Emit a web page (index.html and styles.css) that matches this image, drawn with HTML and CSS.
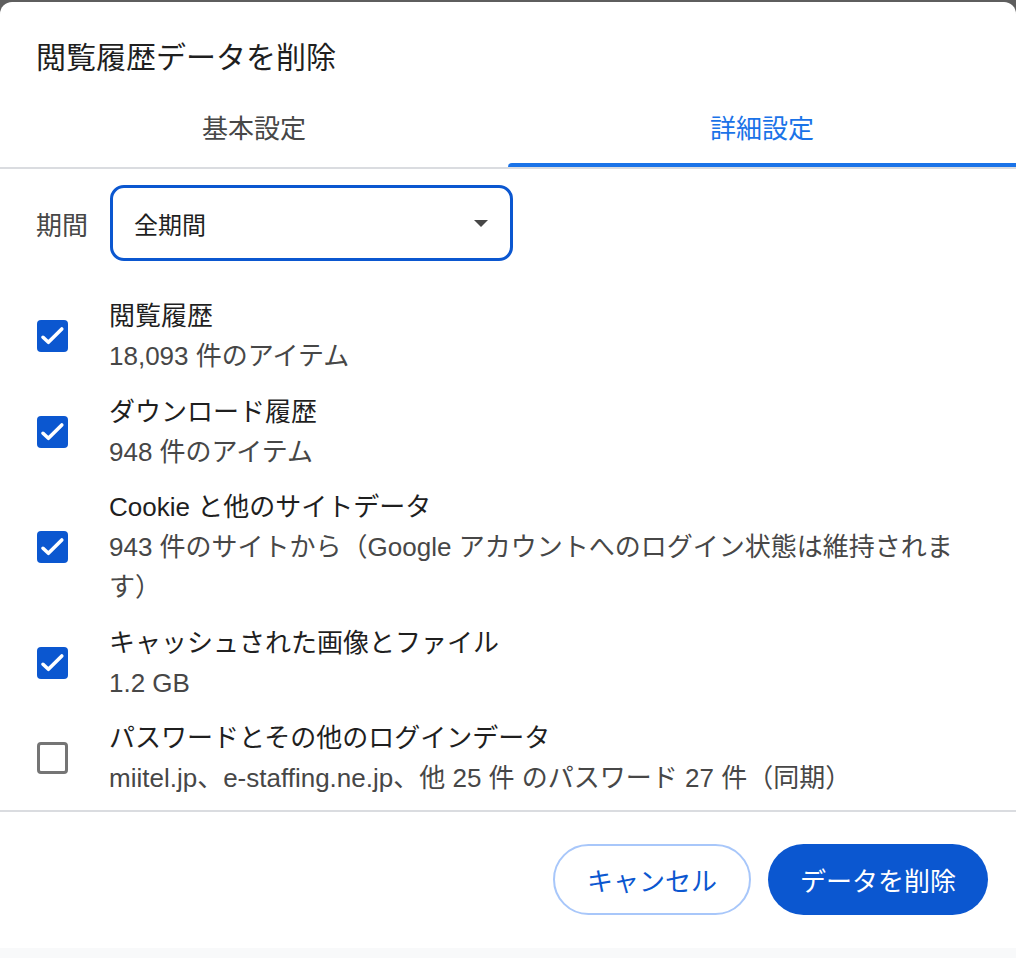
FILE: index.html
```html
<!DOCTYPE html>
<html>

<head>
    <meta charset="utf-8">
    <title>閲覧履歴データを削除</title>
    <link rel="stylesheet" href="styles.css">
</head>

<body>
    <div class="dialog">
        <div class="title">閲覧履歴データを削除</div>
        <ul class="tabs">
            <li>基本設定</li>
            <li class="current">詳細設定</li>
        </ul>
        <div class="content">
            <div class="period">
                <span class="period-label">期間</span>
                <div class="select">
                    <span>全期間</span>
                    <i class="arrow"></i>
                </div>
            </div>
            <ul class="items">
                <li>
                    <span class="box checked"><svg viewBox="0 0 31 31"><path d="M6 17.3l5.4 5 13.4-13.4"/></svg></span>
                    <div class="text">
                        <div class="name">閲覧履歴</div>
                        <div class="desc">18,093 件のアイテム</div>
                    </div>
                </li>
                <li>
                    <span class="box checked"><svg viewBox="0 0 31 31"><path d="M6 17.3l5.4 5 13.4-13.4"/></svg></span>
                    <div class="text">
                        <div class="name">ダウンロード履歴</div>
                        <div class="desc">948 件のアイテム</div>
                    </div>
                </li>
                <li>
                    <span class="box checked"><svg viewBox="0 0 31 31"><path d="M6 17.3l5.4 5 13.4-13.4"/></svg></span>
                    <div class="text">
                        <div class="name">Cookie と他のサイトデータ</div>
                        <div class="desc">943 件のサイトから（Google アカウントへのログイン状態は維持されます）</div>
                    </div>
                </li>
                <li>
                    <span class="box checked"><svg viewBox="0 0 31 31"><path d="M6 17.3l5.4 5 13.4-13.4"/></svg></span>
                    <div class="text">
                        <div class="name">キャッシュされた画像とファイル</div>
                        <div class="desc">1.2 GB</div>
                    </div>
                </li>
                <li>
                    <span class="box"></span>
                    <div class="text">
                        <div class="name">パスワードとその他のログインデータ</div>
                        <div class="desc">miitel.jp、e-staffing.ne.jp、他 25 件 のパスワード 27 件（同期）</div>
                    </div>
                </li>
            </ul>
        </div>
        <div class="footer">
            <a class="btn cancel" href="javascript:void(0)">キャンセル</a>
            <a class="btn primary" href="javascript:void(0)">データを削除</a>
        </div>
    </div>
</body>

</html>
```

FILE: styles.css
```css
* {
    padding: 0;
    margin: 0;
    box-sizing: border-box;
}

ul {
    list-style: none;
}

a {
    text-decoration: none;
}

html,
body {
    width: 100%;
    height: 100%;
}

body {
    font-family: "Liberation Sans", "Noto Sans CJK JP", sans-serif;
    color: #1f1f1f;
    background: linear-gradient(#5e5e5e 0, #5e5e5e 20px, #f8f9fa 20px);
    overflow: hidden;
}

.dialog {
    margin-top: 2px;
    height: 946px;
    background-color: #fff;
    border-radius: 12px 12px 0 0;
}

.title {
    padding: 35px 36px 0;
    font-size: 30px;
    line-height: 42px;
}

.tabs {
    display: grid;
    grid-template-columns: 1fr 1fr;
    border-bottom: 2px solid #dadce0;
}

.tabs li {
    position: relative;
    padding: 30px 0 18px;
    font-size: 26px;
    line-height: 40px;
    text-align: center;
    color: #474747;
}

.tabs li.current {
    color: #1a73e8;
}

.tabs li.current::after {
    content: "";
    position: absolute;
    left: 0;
    right: 0;
    bottom: 0;
    height: 4px;
    background-color: #1a73e8;
    border-radius: 4px 0 0 0;
}

.content {
    height: 643px;
    padding: 16px 40px 0 36px;
    border-bottom: 2px solid #dadce0;
}

.period {
    display: flex;
    align-items: center;
    gap: 22px;
}

.period-label {
    font-size: 26px;
    color: #474747;
}

.select {
    display: flex;
    align-items: center;
    justify-content: space-between;
    width: 403px;
    height: 76px;
    padding: 0 22px 0 21px;
    border: 3px solid #0b57d0;
    border-radius: 14px;
    font-size: 24px;
    color: #1f1f1f;
}

.arrow {
    width: 0;
    height: 0;
    border-left: 7px solid transparent;
    border-right: 7px solid transparent;
    border-top: 7px solid #474747;
}

.items {
    margin-top: 35px;
    display: flex;
    flex-direction: column;
    gap: 15.5px;
}

.items li {
    display: flex;
    align-items: center;
    gap: 41px;
}

.box {
    flex: none;
    width: 31px;
    height: 32px;
    margin-left: 1px;
    border: 3px solid #757575;
    border-radius: 4px;
}

.box.checked {
    border: none;
    background-color: #0b57d0;
}

.box svg {
    display: block;
    width: 31px;
    height: 31px;
    fill: none;
    stroke: #fff;
    stroke-width: 3.6;
    stroke-linecap: round;
    stroke-linejoin: round;
}

.text {
    font-size: 26px;
    line-height: 40px;
}

.desc {
    color: #474747;
}

.footer {
    display: flex;
    justify-content: flex-end;
    gap: 17px;
    padding: 32px 28px 0;
}

.btn {
    display: flex;
    align-items: center;
    height: 71px;
    padding: 0 32px;
    border-radius: 36px;
    font-size: 26px;
}

.btn.cancel {
    padding: 0 32px;
    border: 2px solid #a8c7fa;
    color: #0b57d0;
}

.btn.primary {
    background-color: #0b57d0;
    color: #fff;
}
```
